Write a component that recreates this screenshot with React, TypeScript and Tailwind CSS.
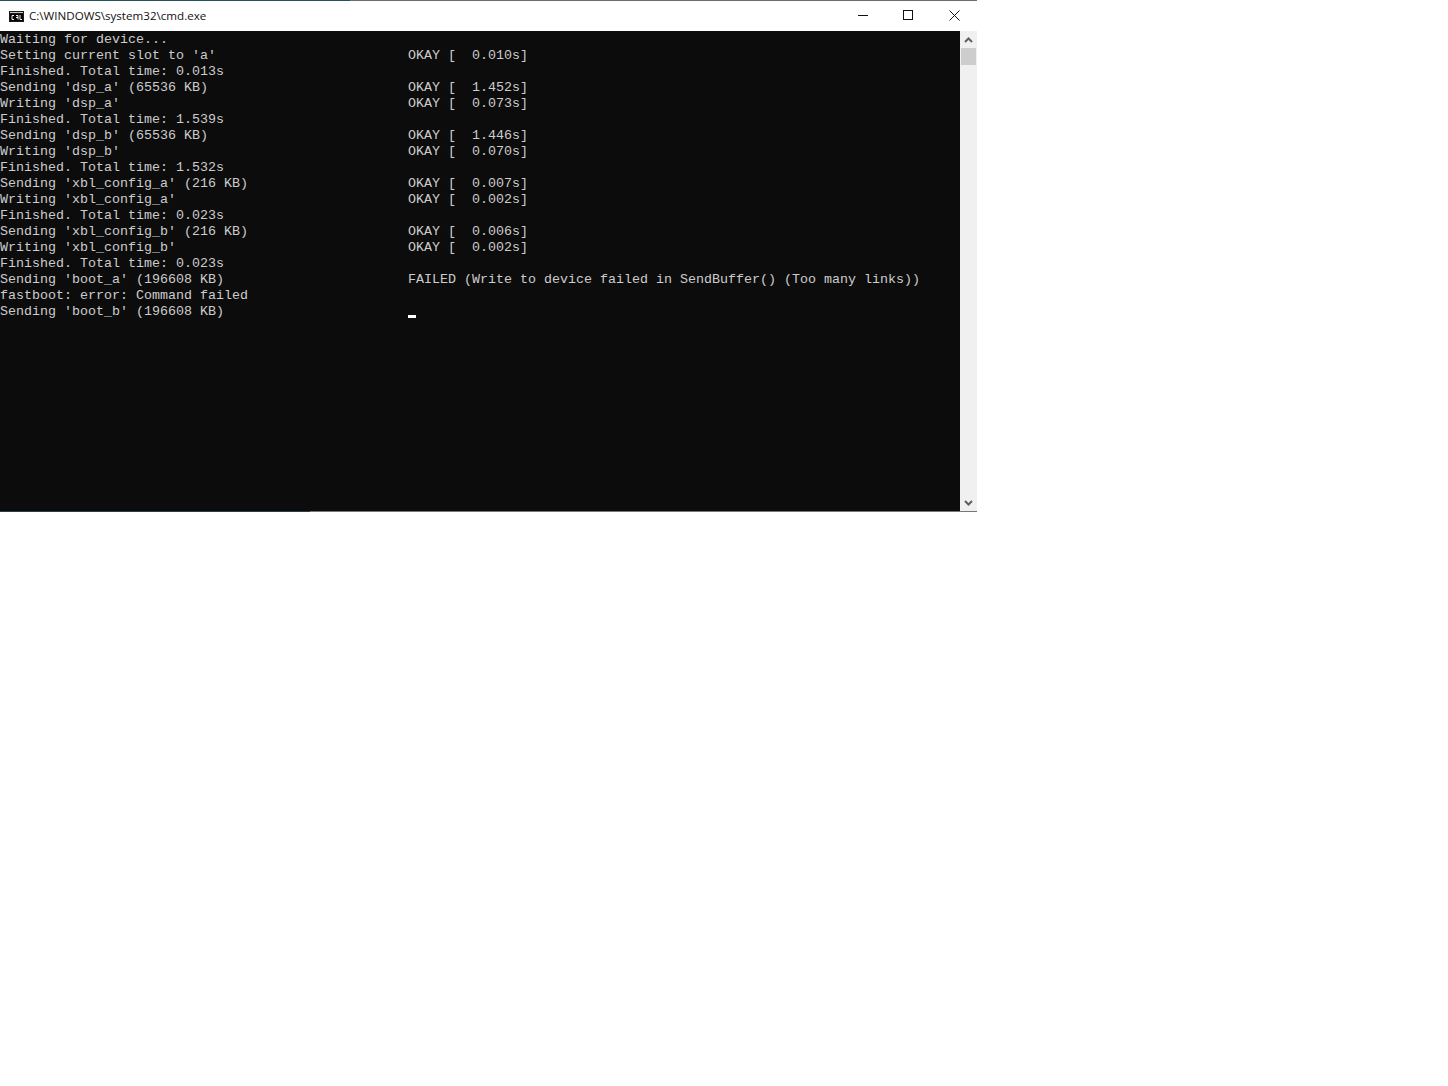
import React from 'react';

type Row = { left: string; right?: string };

const rows: Row[] = [
  { left: 'Waiting for device...' },
  { left: "Setting current slot to 'a'", right: 'OKAY [  0.010s]' },
  { left: 'Finished. Total time: 0.013s' },
  { left: "Sending 'dsp_a' (65536 KB)", right: 'OKAY [  1.452s]' },
  { left: "Writing 'dsp_a'", right: 'OKAY [  0.073s]' },
  { left: 'Finished. Total time: 1.539s' },
  { left: "Sending 'dsp_b' (65536 KB)", right: 'OKAY [  1.446s]' },
  { left: "Writing 'dsp_b'", right: 'OKAY [  0.070s]' },
  { left: 'Finished. Total time: 1.532s' },
  { left: "Sending 'xbl_config_a' (216 KB)", right: 'OKAY [  0.007s]' },
  { left: "Writing 'xbl_config_a'", right: 'OKAY [  0.002s]' },
  { left: 'Finished. Total time: 0.023s' },
  { left: "Sending 'xbl_config_b' (216 KB)", right: 'OKAY [  0.006s]' },
  { left: "Writing 'xbl_config_b'", right: 'OKAY [  0.002s]' },
  { left: 'Finished. Total time: 0.023s' },
  { left: "Sending 'boot_a' (196608 KB)", right: 'FAILED (Write to device failed in SendBuffer() (Too many links))' },
  { left: 'fastboot: error: Command failed' },
];

function CmdIcon() {
  return (
    <svg width="15" height="11" viewBox="0 0 15 11" className="block">
      <rect x="0" y="0" width="15" height="11" fill="#1a1a1a" />
      <rect x="1" y="1" width="13" height="1" fill="#c4c4c4" />
      <rect x="1" y="3" width="13" height="7" fill="#050505" />
      <path d="M5 4.5H3v4h2M7 4.5h2v4M7 6.5h2M11 4v4.5h2" fill="none" stroke="#f0f0f0" strokeWidth="1" />
    </svg>
  );
}

export default function App() {
  return (
    <div className="min-h-[1086px] bg-white">
      <div className="w-[977px] h-[512px] flex flex-col bg-white">
        <div className="h-px shrink-0 flex">
          <div className="w-[350px] bg-[#24505f]" />
          <div className="flex-1 bg-[#6e6e6e]" />
        </div>

        <header className="h-[30px] shrink-0 flex items-center">
          <div className="ml-[9px] mr-[5px]">
            <CmdIcon />
          </div>
          <span className="flex-1 text-[11.6px] text-[#111111] font-['Open_Sans','Liberation_Sans',sans-serif]">
            C:\WINDOWS\system32\cmd.exe
          </span>
          <div className="flex h-full items-center pb-[2px]">
            <div className="w-[46px] h-full flex items-center justify-center pl-[2px]">
              <svg width="10" height="10" viewBox="0 0 10 10">
                <path d="M0 5.5H10" stroke="#111" strokeWidth="1" />
              </svg>
            </div>
            <div className="w-[46px] h-full flex items-center justify-center">
              <svg width="10" height="10" viewBox="0 0 10 10">
                <rect x="0.5" y="0.5" width="9" height="9" fill="none" stroke="#111" strokeWidth="1" />
              </svg>
            </div>
            <div className="w-[46px] h-full flex items-center justify-center pl-px">
              <svg width="11" height="11" viewBox="0 0 11 11">
                <path d="M0.5 0.5L10.5 10.5M10.5 0.5L0.5 10.5" stroke="#111" strokeWidth="1" />
              </svg>
            </div>
          </div>
        </header>

        <div className="flex-1 flex min-h-0">
          <main className="w-[960px] pt-px bg-[#0c0c0c] text-[#cccccc] font-['Liberation_Mono',monospace] text-[13.33px] leading-4 whitespace-pre">
            {rows.map((row, i) => (
              <div key={i} className="flex h-4">
                <span className="w-[408px] shrink-0">{row.left}</span>
                {row.right && <span>{row.right}</span>}
              </div>
            ))}
            <div className="flex h-4">
              <span className="w-[408px] shrink-0">Sending 'boot_b' (196608 KB)</span>
              <span className="w-2 h-[3px] mt-[11px] bg-white" />
            </div>
          </main>
          <aside className="w-[17px] bg-[#f0f0f0] flex flex-col">
            <div className="h-[17px] flex items-center justify-center">
              <svg width="9" height="6" viewBox="0 0 9 6">
                <path d="M1 5L4.5 1.5L8 5" fill="none" stroke="#606060" strokeWidth="2" />
              </svg>
            </div>
            <div className="h-[17px] mx-px bg-[#cdcdcd]" />
            <div className="flex-1" />
            <div className="h-[17px] flex items-center justify-center">
              <svg width="9" height="6" viewBox="0 0 9 6">
                <path d="M1 1L4.5 4.5L8 1" fill="none" stroke="#606060" strokeWidth="2" />
              </svg>
            </div>
          </aside>
        </div>

        <div className="h-px shrink-0 flex">
          <div className="w-[310px] bg-[#2b3e48]" />
          <div className="flex-1 bg-[#777777]" />
        </div>
      </div>
    </div>
  );
}
